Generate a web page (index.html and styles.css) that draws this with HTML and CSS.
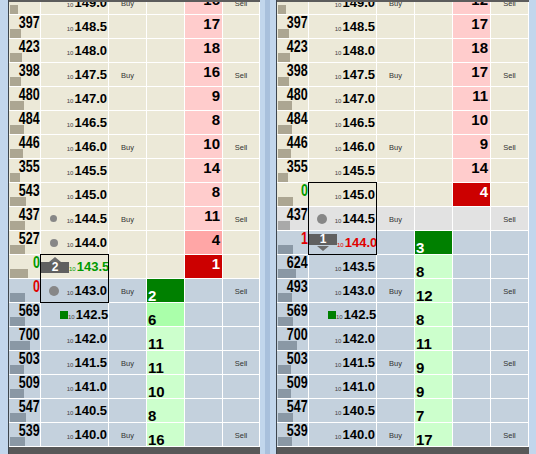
FILE: index.html
```html
<!DOCTYPE html>
<html lang="en">
<head>
    <meta charset="UTF-8">
    <title>Depth Ladder</title>
    <link rel="stylesheet" href="styles.css">
</head>
<body>
    <div class="edge"></div>

    <!-- ladder 1 -->
    <div class="ladder">
        <div class="ladder-top"></div>
        <div class="ladder-body">
            <div class="rows">
                <div class="row up"><div class="vol"><b></b><i style="width:8px"></i></div><div class="px"><span class="mk"></span><span class="val"><small>10</small>149.0</span></div><div class="buy">Buy</div><div class="bid"></div><div class="ask l">16</div><div class="sell">Sell</div></div>
                <div class="row up"><div class="vol"><b>397</b><i style="width:11px"></i></div><div class="px"><span class="mk"></span><span class="val"><small>10</small>148.5</span></div><div class="buy"></div><div class="bid"></div><div class="ask l">17</div><div class="sell"></div></div>
                <div class="row up"><div class="vol"><b>423</b><i style="width:12px"></i></div><div class="px"><span class="mk"></span><span class="val"><small>10</small>148.0</span></div><div class="buy"></div><div class="bid"></div><div class="ask l">18</div><div class="sell"></div></div>
                <div class="row up"><div class="vol"><b>398</b><i style="width:11px"></i></div><div class="px"><span class="mk"></span><span class="val"><small>10</small>147.5</span></div><div class="buy">Buy</div><div class="bid"></div><div class="ask l">16</div><div class="sell">Sell</div></div>
                <div class="row up"><div class="vol"><b>480</b><i style="width:14px"></i></div><div class="px"><span class="mk"></span><span class="val"><small>10</small>147.0</span></div><div class="buy"></div><div class="bid"></div><div class="ask l">9</div><div class="sell"></div></div>
                <div class="row up"><div class="vol"><b>484</b><i style="width:14px"></i></div><div class="px"><span class="mk"></span><span class="val"><small>10</small>146.5</span></div><div class="buy"></div><div class="bid"></div><div class="ask l">8</div><div class="sell"></div></div>
                <div class="row up"><div class="vol"><b>446</b><i style="width:13px"></i></div><div class="px"><span class="mk"></span><span class="val"><small>10</small>146.0</span></div><div class="buy">Buy</div><div class="bid"></div><div class="ask l">10</div><div class="sell">Sell</div></div>
                <div class="row up"><div class="vol"><b>355</b><i style="width:10px"></i></div><div class="px"><span class="mk"></span><span class="val"><small>10</small>145.5</span></div><div class="buy"></div><div class="bid"></div><div class="ask l">14</div><div class="sell"></div></div>
                <div class="row up"><div class="vol"><b>543</b><i style="width:16px"></i></div><div class="px"><span class="mk"></span><span class="val"><small>10</small>145.0</span></div><div class="buy"></div><div class="bid"></div><div class="ask l">8</div><div class="sell"></div></div>
                <div class="row up"><div class="vol"><b>437</b><i style="width:15px"></i></div><div class="px"><span class="mk"><span class="dot s"></span></span><span class="val"><small>10</small>144.5</span></div><div class="buy">Buy</div><div class="bid"></div><div class="ask l">11</div><div class="sell">Sell</div></div>
                <div class="row up"><div class="vol"><b>527</b><i style="width:15px"></i></div><div class="px"><span class="mk"><span class="dot"></span></span><span class="val"><small>10</small>144.0</span></div><div class="buy"></div><div class="bid"></div><div class="ask m">4</div><div class="sell"></div></div>
                <div class="row up"><div class="vol"><b class="gain">0</b><i style="width:18px"></i></div><div class="px sel-host"><span class="sel"></span><span class="mk top"><span class="tri-up"></span><span class="badge">2</span></span><span class="val gain"><small>10</small>143.5</span></div><div class="buy"></div><div class="bid"></div><div class="ask h">1</div><div class="sell"></div></div>
                <div class="row dn"><div class="vol"><b class="loss">0</b><i style="width:15px"></i></div><div class="px"><span class="mk"><span class="dot l"></span></span><span class="val"><small>10</small>143.0</span></div><div class="buy">Buy</div><div class="bid h">2</div><div class="ask"></div><div class="sell">Sell</div></div>
                <div class="row dn"><div class="vol"><b>569</b><i style="width:15px"></i></div><div class="px"><span class="mk"><span class="sq"></span></span><span class="val"><small>10</small>142.5</span></div><div class="buy"></div><div class="bid m">6</div><div class="ask"></div><div class="sell"></div></div>
                <div class="row dn"><div class="vol"><b>700</b><i style="width:20px"></i></div><div class="px"><span class="mk"></span><span class="val"><small>10</small>142.0</span></div><div class="buy"></div><div class="bid l">11</div><div class="ask"></div><div class="sell"></div></div>
                <div class="row dn"><div class="vol"><b>503</b><i style="width:14px"></i></div><div class="px"><span class="mk"></span><span class="val"><small>10</small>141.5</span></div><div class="buy">Buy</div><div class="bid l">11</div><div class="ask"></div><div class="sell">Sell</div></div>
                <div class="row dn"><div class="vol"><b>509</b><i style="width:14px"></i></div><div class="px"><span class="mk"></span><span class="val"><small>10</small>141.0</span></div><div class="buy"></div><div class="bid l">10</div><div class="ask"></div><div class="sell"></div></div>
                <div class="row dn"><div class="vol"><b>547</b><i style="width:16px"></i></div><div class="px"><span class="mk"></span><span class="val"><small>10</small>140.5</span></div><div class="buy"></div><div class="bid l">8</div><div class="ask"></div><div class="sell"></div></div>
                <div class="row dn"><div class="vol"><b>539</b><i style="width:15px"></i></div><div class="px"><span class="mk"></span><span class="val"><small>10</small>140.0</span></div><div class="buy">Buy</div><div class="bid l">16</div><div class="ask"></div><div class="sell">Sell</div></div>
            </div>
        </div>
        <div class="ladder-foot"></div>
    </div>

    <div class="splitter"><span></span></div>

    <!-- ladder 2 -->
    <div class="ladder wide">
        <div class="ladder-top"></div>
        <div class="ladder-body">
            <div class="rows">
                <div class="row up"><div class="vol"><b></b><i style="width:8px"></i></div><div class="px"><span class="mk"></span><span class="val"><small>10</small>149.0</span></div><div class="buy">Buy</div><div class="bid"></div><div class="ask l">12</div><div class="sell">Sell</div></div>
                <div class="row up"><div class="vol"><b>397</b><i style="width:11px"></i></div><div class="px"><span class="mk"></span><span class="val"><small>10</small>148.5</span></div><div class="buy"></div><div class="bid"></div><div class="ask l">17</div><div class="sell"></div></div>
                <div class="row up"><div class="vol"><b>423</b><i style="width:12px"></i></div><div class="px"><span class="mk"></span><span class="val"><small>10</small>148.0</span></div><div class="buy"></div><div class="bid"></div><div class="ask l">18</div><div class="sell"></div></div>
                <div class="row up"><div class="vol"><b>398</b><i style="width:11px"></i></div><div class="px"><span class="mk"></span><span class="val"><small>10</small>147.5</span></div><div class="buy">Buy</div><div class="bid"></div><div class="ask l">17</div><div class="sell">Sell</div></div>
                <div class="row up"><div class="vol"><b>480</b><i style="width:14px"></i></div><div class="px"><span class="mk"></span><span class="val"><small>10</small>147.0</span></div><div class="buy"></div><div class="bid"></div><div class="ask l">11</div><div class="sell"></div></div>
                <div class="row up"><div class="vol"><b>484</b><i style="width:14px"></i></div><div class="px"><span class="mk"></span><span class="val"><small>10</small>146.5</span></div><div class="buy"></div><div class="bid"></div><div class="ask l">10</div><div class="sell"></div></div>
                <div class="row up"><div class="vol"><b>446</b><i style="width:13px"></i></div><div class="px"><span class="mk"></span><span class="val"><small>10</small>146.0</span></div><div class="buy">Buy</div><div class="bid"></div><div class="ask l">9</div><div class="sell">Sell</div></div>
                <div class="row up"><div class="vol"><b>355</b><i style="width:10px"></i></div><div class="px"><span class="mk"></span><span class="val"><small>10</small>145.5</span></div><div class="buy"></div><div class="bid"></div><div class="ask l">14</div><div class="sell"></div></div>
                <div class="row up"><div class="vol"><b class="gain">0</b><i style="width:15px"></i></div><div class="px sel-host"><span class="sel tall"></span><span class="mk"></span><span class="val"><small>10</small>145.0</span></div><div class="buy"></div><div class="bid"></div><div class="ask h">4</div><div class="sell"></div></div>
                <div class="row mid"><div class="vol"><b>437</b><i style="width:12px"></i></div><div class="px"><span class="mk"><span class="dot l"></span></span><span class="val"><small>10</small>144.5</span></div><div class="buy">Buy</div><div class="bid"></div><div class="ask"></div><div class="sell">Sell</div></div>
                <div class="row dn"><div class="vol"><b class="loss">1</b><i style="width:15px"></i></div><div class="px"><span class="mk top"><span class="badge low">1</span><span class="tri-dn"></span></span><span class="val loss"><small>10</small>144.0</span></div><div class="buy"></div><div class="bid h">3</div><div class="ask"></div><div class="sell"></div></div>
                <div class="row dn"><div class="vol"><b>624</b><i style="width:18px"></i></div><div class="px"><span class="mk"></span><span class="val"><small>10</small>143.5</span></div><div class="buy"></div><div class="bid l">8</div><div class="ask"></div><div class="sell"></div></div>
                <div class="row dn"><div class="vol"><b>493</b><i style="width:14px"></i></div><div class="px"><span class="mk"></span><span class="val"><small>10</small>143.0</span></div><div class="buy">Buy</div><div class="bid l">12</div><div class="ask"></div><div class="sell">Sell</div></div>
                <div class="row dn"><div class="vol"><b>569</b><i style="width:15px"></i></div><div class="px"><span class="mk"><span class="sq"></span></span><span class="val"><small>10</small>142.5</span></div><div class="buy"></div><div class="bid l">8</div><div class="ask"></div><div class="sell"></div></div>
                <div class="row dn"><div class="vol"><b>700</b><i style="width:19px"></i></div><div class="px"><span class="mk"></span><span class="val"><small>10</small>142.0</span></div><div class="buy"></div><div class="bid l">11</div><div class="ask"></div><div class="sell"></div></div>
                <div class="row dn"><div class="vol"><b>503</b><i style="width:13px"></i></div><div class="px"><span class="mk"></span><span class="val"><small>10</small>141.5</span></div><div class="buy">Buy</div><div class="bid l">9</div><div class="ask"></div><div class="sell">Sell</div></div>
                <div class="row dn"><div class="vol"><b>509</b><i style="width:13px"></i></div><div class="px"><span class="mk"></span><span class="val"><small>10</small>141.0</span></div><div class="buy"></div><div class="bid l">9</div><div class="ask"></div><div class="sell"></div></div>
                <div class="row dn"><div class="vol"><b>547</b><i style="width:15px"></i></div><div class="px"><span class="mk"></span><span class="val"><small>10</small>140.5</span></div><div class="buy"></div><div class="bid l">7</div><div class="ask"></div><div class="sell"></div></div>
                <div class="row dn"><div class="vol"><b>539</b><i style="width:14px"></i></div><div class="px"><span class="mk"></span><span class="val"><small>10</small>140.0</span></div><div class="buy">Buy</div><div class="bid l">17</div><div class="ask"></div><div class="sell">Sell</div></div>
            </div>
        </div>
        <div class="ladder-foot"></div>
    </div>

    <div class="edge-r"></div>
</body>
</html>
```

FILE: styles.css
```css
body {
    margin: 0;
    height: 454px;
    overflow: hidden;
    display: flex;
    background-color: #c2d6ec;
    font-family: "Liberation Sans", Arial, sans-serif;
    color: #000;
}

.edge {
    width: 8px;
}

.edge-r {
    width: 7px;
}

/* strip between the two ladders */
.splitter {
    width: 16px;
    padding-left: 5px;
    box-sizing: border-box;
}

.splitter span {
    display: block;
    width: 5px;
    height: 100%;
    background-color: #a9c0dc;
}

/* Ladder frame */
.ladder {
    display: flex;
    flex-direction: column;
    border-left: 1px solid #3e464e;
}

.ladder-top {
    height: 2px;
    background-color: #5c5c5c;
}

.ladder-body {
    height: 445px;
    overflow: hidden;
    background-color: #fff;
    padding-right: 1px;
}

.ladder-foot {
    height: 7px;
    background-color: #585858;
}

.rows {
    display: flex;
    flex-direction: column;
    gap: 1px;
    margin-top: -11px;
}

.row {
    display: grid;
    grid-template-columns: 31px 67px 37px 37px 37px 36px;
    gap: 1px;
    height: 23px;
    --bg: #ece9d8;
    --bar: #aca692;
}

.ladder.wide .row {
    grid-template-columns: 31px 67px 37px 37px 37px 37px;
}

.row.dn {
    --bg: #c4d1dd;
    --bar: #8a98a5;
}

.row.mid {
    --bg: #e2e2e2;
    --bar: #a9a9a9;
}

.row > div {
    background-color: var(--bg);
    min-width: 0;
}

/* Volume column */
.vol {
    display: flex;
    flex-direction: column;
    align-items: flex-end;
}

.vol b {
    display: inline-block;
    font-size: 16px;
    line-height: 14px;
    height: 13px;
    margin-top: 1px;
    transform: scaleX(0.78);
    transform-origin: right center;
}

.vol i {
    margin-top: auto;
    align-self: flex-start;
    margin-left: 1px;
    height: 9px;
    background-color: var(--bar);
}

.gain {
    color: #009a00;
}

.loss {
    color: #e00000;
}

/* Price column */
.px {
    display: flex;
    align-items: flex-end;
    padding: 0 1px 2px 0;
    box-sizing: border-box;
}

.mk {
    width: 30px;
    align-self: stretch;
    display: flex;
    flex-direction: column;
    align-items: center;
    justify-content: center;
    margin-bottom: -2px;
}

.mk.top {
    justify-content: flex-start;
    padding-top: 2px;
}

.val {
    margin-left: auto;
    font-size: 13px;
    line-height: 13px;
    font-weight: bold;
    white-space: nowrap;
}

.val small {
    font-size: 6px;
    font-weight: normal;
    color: #444;
    margin-right: 1px;
}

.val.loss small {
    color: #e00000;
}

.val.gain small {
    color: #009a00;
}

.dot {
    width: 8px;
    height: 8px;
    border-radius: 50%;
    background-color: #878787;
}

.dot.s {
    width: 7px;
    height: 7px;
}

.dot.l {
    width: 10px;
    height: 10px;
}

.sq {
    width: 8px;
    height: 8px;
    background-color: #008000;
    align-self: flex-start;
    margin-left: 19px;
}

.badge {
    width: 28px;
    height: 11px;
    background-color: #606060;
    color: #fff;
    font-size: 12px;
    line-height: 11px;
    font-weight: bold;
    text-align: center;
}

.badge.low {
    margin-top: 1px;
    margin-bottom: 1px;
}

.tri-up {
    width: 0;
    height: 0;
    border-left: 6px solid transparent;
    border-right: 6px solid transparent;
    border-bottom: 5px solid #6c6c6c;
}

.tri-dn {
    width: 0;
    height: 0;
    border-left: 6px solid transparent;
    border-right: 6px solid transparent;
    border-top: 5px solid #6c6c6c;
}

/* outline drawn across the working price rows */
.sel-host {
    position: relative;
}

.sel {
    position: absolute;
    top: -1px;
    left: -1px;
    right: -1px;
    height: 49px;
    border: 1px solid #000;
    box-sizing: border-box;
    pointer-events: none;
}

.sel.tall {
    height: 73px;
}

/* Order columns */
.buy,
.sell {
    display: flex;
    align-items: center;
    justify-content: center;
    padding-top: 2px;
    box-sizing: border-box;
    font-size: 7.5px;
    color: #333;
}

.ask {
    font-size: 15px;
    line-height: 15px;
    font-weight: bold;
    text-align: right;
    padding: 1px 2px 0 0;
    box-sizing: border-box;
}

.bid {
    display: flex;
    align-items: flex-end;
    padding-left: 1px;
    font-size: 15px;
    line-height: 12px;
    font-weight: bold;
}

.row > .ask.l { background-color: #ffcccc; }
.row > .ask.m { background-color: #ffa6a6; }
.row > .ask.h { background-color: #cc0000; color: #fff; }

.row > .bid.l { background-color: #ccffcc; }
.row > .bid.m { background-color: #aaffaa; }
.row > .bid.h { background-color: #008000; color: #fff; }
```
